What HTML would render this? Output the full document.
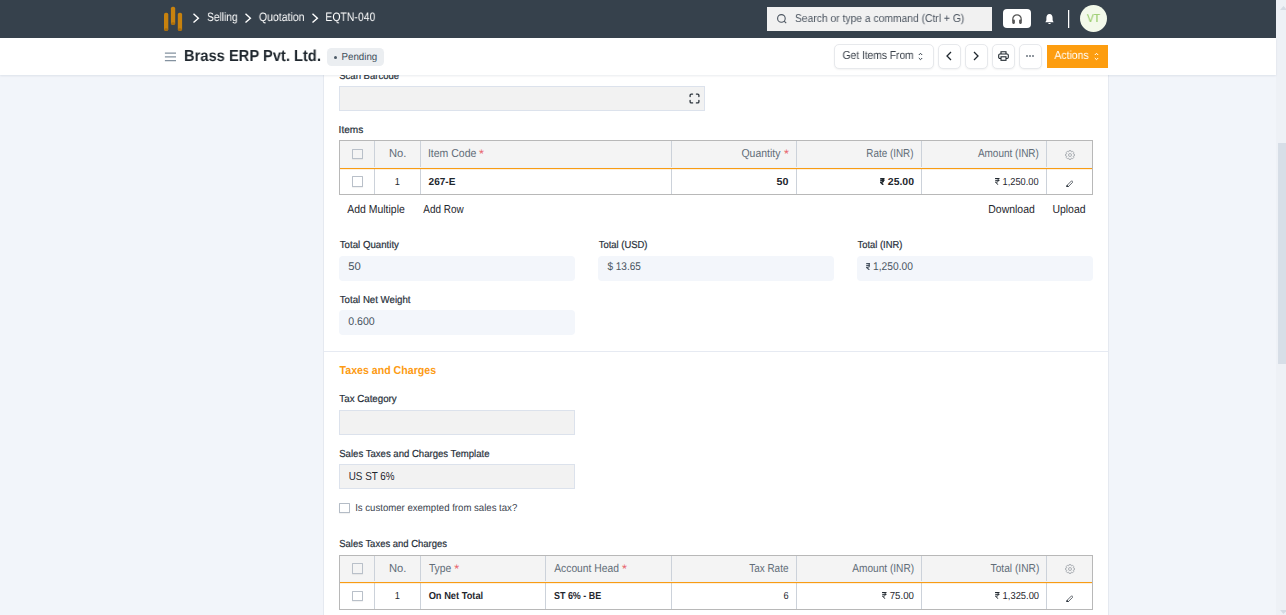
<!DOCTYPE html>
<html>
<head>
<meta charset="utf-8">
<title>EQTN-040</title>
<style>
*{box-sizing:border-box;margin:0;padding:0}
html,body{width:1286px;height:615px;overflow:hidden;background:#f2f5fa;font-family:"Liberation Sans",sans-serif}
body{position:relative}
.a,.t,svg{position:absolute}
.g{will-change:transform}
.t{white-space:nowrap;line-height:1;transform-origin:0 0;display:block;text-rendering:geometricPrecision}
.inp{background:#f2f2f2;border:1px solid #dce2ec}
.ro{background:#f3f6fb;border-radius:4px}
.tbl{border:1px solid #b8b8b8;background:#fff}
.th{background:#f4f4f4}
.ol{background:#f89c14;height:1px;box-shadow:0 1px 0 rgba(248,156,20,.15)}
.v{width:1px;background:#ccd2da}
.cb{width:11px;height:11px;border:1px solid #b9c0c9;border-radius:0.500px;background:#fff;box-shadow:0 1px 1px rgba(0,0,0,.06)}
.btn{background:#fff;border:1px solid #e7e9ec;border-radius:5px;box-shadow:0 1px 2px rgba(0,0,0,.05)}
</style>
</head>
<body>
<!-- scrollbar -->
<div class="a" style="left:1276px;top:0;width:10px;height:615px;background:#eef1f6"></div>
<div class="a" style="left:1278px;top:143px;width:8px;height:221px;background:#d7dee7"></div>
<svg style="left:1279.900px;top:5.900px" width="7" height="3.900" viewBox="0 0 7 3.900"><path d="M0 3.900 L3.500 0 L7 3.900Z" fill="#d5dbe4"/></svg>
<svg style="left:1279.900px;top:610px" width="7" height="4" viewBox="0 0 7 4"><path d="M0 0 L3.500 4 L7 0Z" fill="#d5dbe4"/></svg>

<!-- card -->
<div class="a" style="left:323px;top:75px;width:786px;height:540px;background:#fff;border-left:1px solid #e5e9f0;border-right:1px solid #e5e9f0"></div>

<!-- barcode input -->
<div class="a inp" style="left:339px;top:86px;width:366px;height:25px"></div>
<svg style="left:688.500px;top:92.600px" width="11" height="11" viewBox="0 0 11 11" fill="none" stroke="#2b333b" stroke-width="1.300" stroke-linecap="round"><path d="M1.100 3.600 V2.300 Q1.100 1.100 2.300 1.100 H3.600 M7.400 1.100 H8.700 Q9.900 1.100 9.900 2.300 V3.600 M9.900 7.400 V8.700 Q9.900 9.900 8.700 9.900 H7.400 M3.600 9.900 H2.300 Q1.100 9.900 1.100 8.700 V7.400"/></svg>

<!-- items table -->
<div class="a tbl" style="left:339px;top:140px;width:754px;height:55px"></div>
<div class="a th" style="left:340px;top:141px;width:752px;height:26px"></div>
<div class="a v" style="left:374px;top:141px;height:53px"></div>
<div class="a v" style="left:420px;top:141px;height:53px"></div>
<div class="a v" style="left:671px;top:141px;height:53px"></div>
<div class="a v" style="left:796px;top:141px;height:53px"></div>
<div class="a v" style="left:921px;top:141px;height:53px"></div>
<div class="a v" style="left:1046px;top:141px;height:53px"></div>
<div class="a" style="left:340px;top:167px;width:752px;height:1px;background:#eef2f8"></div>
<div class="a ol" style="left:340px;top:168px;width:752px"></div>
<div class="a cb" style="left:352px;top:149px;height:10px;background:transparent"></div>
<div class="a cb" style="left:352px;top:176px;height:11px"></div>
<svg style="left:1065px;top:150px" width="10" height="10" viewBox="0 0 10 10" fill="none" stroke="#9a9fa6" stroke-width="0.800" stroke-linejoin="round"><path d="M4.21 0.47 L5.79 0.47 L5.86 1.40 L6.93 1.85 L7.65 1.24 L8.76 2.35 L8.15 3.07 L8.60 4.14 L9.53 4.21 L9.53 5.79 L8.60 5.86 L8.15 6.93 L8.76 7.65 L7.65 8.76 L6.93 8.15 L5.86 8.60 L5.79 9.53 L4.21 9.53 L4.14 8.60 L3.07 8.15 L2.35 8.76 L1.24 7.65 L1.85 6.93 L1.40 5.86 L0.47 5.79 L0.47 4.21 L1.40 4.14 L1.85 3.07 L1.24 2.35 L2.35 1.24 L3.07 1.85 L4.14 1.40Z"/><circle cx="5" cy="5" r="1.500"/></svg><svg style="left:1065.500px;top:179.700px" width="7.700" height="7.700" viewBox="0 0 9 9" fill="none" stroke="#2b333b" stroke-width="0.850" stroke-linejoin="round"><path d="M0.900 8.100 L1.300 6.200 L6.300 1.200 Q6.900 0.600 7.500 1.200 L7.800 1.500 Q8.400 2.100 7.800 2.700 L2.800 7.700 Z"/><path d="M0.900 8.100 L1.300 6.200 L2.800 7.700Z" fill="#2b333b"/></svg>

<!-- totals -->
<div class="a ro" style="left:339px;top:256px;width:236px;height:25px"></div>
<div class="a ro" style="left:598px;top:256px;width:236px;height:25px"></div>
<div class="a ro" style="left:857px;top:256px;width:236px;height:25px"></div>
<div class="a ro" style="left:339px;top:310px;width:236px;height:25px"></div>

<!-- section divider -->
<div class="a" style="left:324px;top:351px;width:784px;height:1px;background:#e6eaf2"></div>

<div class="a inp" style="left:339px;top:410px;width:236px;height:25px"></div>
<div class="a inp" style="left:339px;top:464px;width:236px;height:25px"></div>
<div class="a cb" style="left:339px;top:503px;height:10px;border-color:#b4bcc6"></div>

<!-- taxes table -->
<div class="a tbl" style="left:339px;top:555px;width:754px;height:55px"></div>
<div class="a th" style="left:340px;top:556px;width:752px;height:26px"></div>
<div class="a v" style="left:374px;top:556px;height:53px"></div>
<div class="a v" style="left:420px;top:556px;height:53px"></div>
<div class="a v" style="left:545px;top:556px;height:53px"></div>
<div class="a v" style="left:671px;top:556px;height:53px"></div>
<div class="a v" style="left:796px;top:556px;height:53px"></div>
<div class="a v" style="left:921px;top:556px;height:53px"></div>
<div class="a v" style="left:1046px;top:556px;height:53px"></div>
<div class="a" style="left:340px;top:581px;width:752px;height:1px;background:#eef2f8"></div>
<div class="a ol" style="left:340px;top:582px;width:752px"></div>
<div class="a cb" style="left:352px;top:563px;height:11px;background:transparent"></div>
<div class="a cb" style="left:352px;top:591px;height:10px"></div>
<svg style="left:1065px;top:564px" width="10" height="10" viewBox="0 0 10 10" fill="none" stroke="#9a9fa6" stroke-width="0.800" stroke-linejoin="round"><path d="M4.21 0.47 L5.79 0.47 L5.86 1.40 L6.93 1.85 L7.65 1.24 L8.76 2.35 L8.15 3.07 L8.60 4.14 L9.53 4.21 L9.53 5.79 L8.60 5.86 L8.15 6.93 L8.76 7.65 L7.65 8.76 L6.93 8.15 L5.86 8.60 L5.79 9.53 L4.21 9.53 L4.14 8.60 L3.07 8.15 L2.35 8.76 L1.24 7.65 L1.85 6.93 L1.40 5.86 L0.47 5.79 L0.47 4.21 L1.40 4.14 L1.85 3.07 L1.24 2.35 L2.35 1.24 L3.07 1.85 L4.14 1.40Z"/><circle cx="5" cy="5" r="1.500"/></svg><svg style="left:1065.500px;top:594.700px" width="7.700" height="7.700" viewBox="0 0 9 9" fill="none" stroke="#2b333b" stroke-width="0.850" stroke-linejoin="round"><path d="M0.900 8.100 L1.300 6.200 L6.300 1.200 Q6.900 0.600 7.500 1.200 L7.800 1.500 Q8.400 2.100 7.800 2.700 L2.800 7.700 Z"/><path d="M0.900 8.100 L1.300 6.200 L2.800 7.700Z" fill="#2b333b"/></svg>

<span class="t" style="left:339px;top:72px;font-size:10.2px;color:#27303a;-webkit-text-stroke:0.2px;transform:translateX(0.23px) scaleX(0.9349);">Scan Barcode</span>
<!-- page head -->
<div class="a" style="left:0;top:38px;width:1276px;height:37px;background:#fff;box-shadow:0 1px 2px rgba(40,60,90,.10)"></div>
<svg style="left:164px;top:51px" width="13" height="11" viewBox="0 0 13 11" stroke="#8492a0" stroke-width="1.250"><path d="M0.900 2 H12 M0.900 5.800 H12 M0.900 9.600 H12"/></svg>
<div class="a" style="left:327px;top:48px;width:57px;height:18px;border-radius:4.500px;background:#ebeef1"></div>
<div class="a" style="left:334px;top:56px;width:3px;height:3px;border-radius:2px;background:#4c5a67"></div>
<div class="a btn" style="left:834px;top:44px;width:100px;height:25px"></div>
<div class="a btn" style="left:938px;top:44px;width:23px;height:25px"></div>
<div class="a btn" style="left:965px;top:44px;width:23px;height:25px"></div>
<div class="a btn" style="left:992px;top:44px;width:23px;height:25px"></div>
<div class="a btn" style="left:1019px;top:44px;width:23px;height:25px"></div>
<div class="a" style="left:1047px;top:45px;width:61px;height:23px;background:#fd9d0f"></div>
<svg style="left:946px;top:51px" width="6" height="10" viewBox="0 0 6 10" fill="none" stroke="#1f272e" stroke-width="1.3"><path d="M5 1 L1 5 L5 9"/></svg>
<svg style="left:973px;top:51px" width="6" height="10" viewBox="0 0 6 10" fill="none" stroke="#1f272e" stroke-width="1.3"><path d="M1 1 L5 5 L1 9"/></svg>
<svg style="left:998px;top:51px" width="11" height="10" viewBox="0 0 11 10" fill="none" stroke="#1f272e" stroke-width="1.1"><path d="M3 3 V0.700 H8 V3"/><rect x="0.700" y="3" width="9.600" height="4.500" rx="1.200"/><rect x="3" y="5.800" width="5" height="3.500" fill="#fff"/></svg>
<div class="a" style="left:1026px;top:55px;width:2px;height:2px;border-radius:1px;background:#6c7680;box-shadow:3px 0 0 #6c7680,6px 0 0 #6c7680"></div>
<svg style="left:918.200px;top:52px" width="5" height="9" viewBox="0 0 5 9" fill="none" stroke="#36414c" stroke-width="1"><path d="M0.800 3 L2.500 1.300 L4.200 3 M0.800 6 L2.500 7.700 L4.200 6"/></svg>
<svg style="left:1094px;top:52px" width="5" height="9" viewBox="0 0 5 9" fill="none" stroke="#fff" stroke-width="1"><path d="M0.800 3 L2.500 1.300 L4.200 3 M0.800 6 L2.500 7.700 L4.200 6"/></svg>

<!-- navbar -->
<div class="a" style="left:0;top:0;width:1276px;height:38px;background:#36414c"></div>
<svg style="left:163px;top:6px" width="20" height="26" viewBox="0 0 20 26">
  <rect x="1" y="6.700" width="4.300" height="18.400" rx="1.800" fill="#c8820e"/>
  <rect x="7.900" y="0.700" width="4.300" height="18.400" rx="1.800" fill="#c8820e"/>
  <rect x="14.800" y="6.700" width="4.300" height="18.400" rx="1.800" fill="#c8820e"/>
  <ellipse cx="3.150" cy="23.600" rx="1.900" ry="1.300" fill="#a96d0d"/><ellipse cx="10.050" cy="17.600" rx="1.900" ry="1.300" fill="#a96d0d"/><ellipse cx="16.950" cy="23.600" rx="1.900" ry="1.300" fill="#a96d0d"/>
</svg>
<svg style="left:192px;top:12px" width="8" height="12" viewBox="0 0 8 12" fill="none" stroke="#fff" stroke-width="1.400"><path d="M1.500 1.800 L6.400 6.200 L1.500 10.600"/></svg>
<svg style="left:244px;top:12px" width="8" height="12" viewBox="0 0 8 12" fill="none" stroke="#fff" stroke-width="1.400"><path d="M1.500 1.800 L6.400 6.200 L1.500 10.600"/></svg>
<svg style="left:311px;top:12px" width="8" height="12" viewBox="0 0 8 12" fill="none" stroke="#fff" stroke-width="1.400"><path d="M1.500 1.800 L6.400 6.200 L1.500 10.600"/></svg>
<div class="a" style="left:767px;top:7px;width:225px;height:24px;background:#f1f1f1"></div>
<svg style="left:776px;top:13px" width="12" height="12" viewBox="0 0 12 12" fill="none" stroke="#4c5560" stroke-width="1.100"><circle cx="5.400" cy="5.400" r="3.800"/><path d="M8.200 8.200 L10.200 10.200"/></svg>
<div class="a" style="left:1003px;top:9px;width:28px;height:19px;background:#fff;border-radius:4px"></div>
<svg style="left:1011px;top:12.500px" width="12" height="12" viewBox="0 0 12 12"><path d="M1.800 7.500 V6 a4.200 4.200 0 0 1 8.400 0 V7.500" fill="none" stroke="#555" stroke-width="1.200"/><rect x="1.200" y="6.400" width="2.700" height="4.500" rx="1.100" fill="#555"/><rect x="8.100" y="6.400" width="2.700" height="4.500" rx="1.100" fill="#555"/></svg>
<svg style="left:1043.700px;top:12.500px" width="11" height="13.600" viewBox="0 0 12 14"><path d="M6 0.800 C3.600 0.800 2.600 2.800 2.600 5 V7.600 L1.500 9.600 H10.500 L9.400 7.600 V5 C9.400 2.800 8.400 0.800 6 0.800 Z" fill="#fff"/><path d="M4.700 10.400 a1.300 1.300 0 0 0 2.600 0Z" fill="#fff"/></svg>
<div class="a" style="left:1068px;top:10px;width:1px;height:18px;background:#fff;box-shadow:1px 0 0 rgba(255,255,255,.25)"></div>
<div class="a" style="left:1079.800px;top:4.800px;width:27.300px;height:27.300px;border-radius:14px;background:#f3f9ea"></div>

<span class="t g" style="left:206px;top:11px;font-size:12.2px;color:#ffffff;transform:translateX(0.98px) scaleX(0.8397);">Selling</span>
<span class="t g" style="left:258px;top:11px;font-size:12.2px;color:#ffffff;transform:translateX(0.87px) scaleX(0.8641);">Quotation</span>
<span class="t g" style="left:325px;top:11px;font-size:12.2px;color:#ffffff;transform:translateX(0.34px) scaleX(0.8581);">EQTN-040</span>
<span class="t g" style="left:794px;top:14px;font-size:11.4px;color:#4c5560;transform:translateX(0.95px) scaleX(0.9050);">Search or type a command (Ctrl + G)</span>
<span class="t g" style="left:1086px;top:14px;font-size:11.4px;color:#8bc559;transform:translateX(0.90px) scaleX(0.9123);">VT</span>
<span class="t g" style="left:183px;top:49px;font-size:16px;color:#1f272e;font-weight:bold;transform:translateX(0.98px) scaleX(0.9184);">Brass ERP Pvt. Ltd.</span>
<span class="t" style="left:341px;top:53px;font-size:10.2px;color:#414e5b;transform:translateX(0.48px) scaleX(0.9556);">Pending</span>
<span class="t g" style="left:842px;top:50px;font-size:11.6px;color:#383f48;transform:translateX(0.56px) scaleX(0.8833);">Get Items From</span>
<span class="t g" style="left:1054px;top:50px;font-size:11.6px;color:#ffffff;transform:translateX(0.40px) scaleX(0.9007);">Actions</span>
<span class="t" style="left:338px;top:126px;font-size:10.2px;color:#27303a;-webkit-text-stroke:0.2px;transform:translateX(0.61px) scaleX(0.9915);">Items</span>
<span class="t" style="left:389px;top:149px;font-size:11.5px;color:#626d78;transform:translateX(0.03px) scaleX(0.9714);">No.</span>
<span class="t" style="left:427px;top:149px;font-size:11.5px;color:#626d78;transform:translateX(0.89px) scaleX(0.9146);">Item Code</span>
<span class="t" style="left:741px;top:149px;font-size:11.5px;color:#626d78;transform:translateX(0.45px) scaleX(0.9089);">Quantity</span>
<span class="t" style="left:866px;top:149px;font-size:11.5px;color:#626d78;transform:translateX(0.34px) scaleX(0.8582);">Rate (INR)</span>
<span class="t" style="left:977px;top:149px;font-size:11.5px;color:#626d78;transform:translateX(0.90px) scaleX(0.8676);">Amount (INR)</span>
<span class="t" style="left:394px;top:178px;font-size:10.2px;color:#1f272e;transform:translateX(0.80px) scaleX(0.9000);">1</span>
<span class="t" style="left:428px;top:178px;font-size:10.2px;color:#1f272e;font-weight:bold;transform:translateX(0.55px) scaleX(0.9849);">267-E</span>
<span class="t" style="left:776px;top:178px;font-size:10.2px;color:#1f272e;font-weight:bold;transform:translateX(0.54px) scaleX(1.0512);">50</span>
<span class="t" style="left:887px;top:178px;font-size:10.2px;color:#1f272e;font-weight:bold;transform:translateX(0.84px) scaleX(1.0263);">25.00</span>
<span class="t" style="left:1002px;top:178px;font-size:10.2px;color:#1f272e;transform:translateX(0.62px) scaleX(0.9065);">1,250.00</span>
<span class="t" style="left:347px;top:205px;font-size:11.5px;color:#1f272e;transform:translateX(0.30px) scaleX(0.9084);">Add Multiple</span>
<span class="t" style="left:423px;top:205px;font-size:11.5px;color:#1f272e;transform:translateX(0.30px) scaleX(0.8642);">Add Row</span>
<span class="t" style="left:988px;top:205px;font-size:11.5px;color:#1f272e;transform:translateX(0.29px) scaleX(0.9091);">Download</span>
<span class="t" style="left:1052px;top:205px;font-size:11.5px;color:#1f272e;transform:translateX(0.39px) scaleX(0.9094);">Upload</span>
<span class="t" style="left:339px;top:241px;font-size:10.2px;color:#27303a;-webkit-text-stroke:0.2px;transform:translateX(0.76px) scaleX(0.9500);">Total Quantity</span>
<span class="t" style="left:598px;top:241px;font-size:10.2px;color:#27303a;-webkit-text-stroke:0.2px;transform:translateX(0.67px) scaleX(0.9275);">Total (USD)</span>
<span class="t" style="left:857px;top:241px;font-size:10.2px;color:#27303a;-webkit-text-stroke:0.2px;transform:translateX(0.57px) scaleX(0.9194);">Total (INR)</span>
<span class="t" style="left:348px;top:262px;font-size:11.2px;color:#4a5562;transform:translateX(0.20px) scaleX(1.0087);">50</span>
<span class="t" style="left:607px;top:262px;font-size:11.2px;color:#4a5562;transform:translateX(0.38px) scaleX(0.8980);">$ 13.65</span>
<span class="t" style="left:873px;top:262px;font-size:11.2px;color:#4a5562;transform:translateX(0.01px) scaleX(0.9153);">1,250.00</span>
<span class="t" style="left:339px;top:296px;font-size:10.2px;color:#27303a;-webkit-text-stroke:0.2px;transform:translateX(0.76px) scaleX(0.9495);">Total Net Weight</span>
<span class="t" style="left:348px;top:317px;font-size:11.2px;color:#4a5562;transform:translateX(0.23px) scaleX(0.9481);">0.600</span>
<span class="t" style="left:339px;top:366px;font-size:11.5px;color:#fd9b14;font-weight:bold;transform:translateX(0.60px) scaleX(0.9218);">Taxes and Charges</span>
<span class="t" style="left:339px;top:395px;font-size:10.2px;color:#27303a;-webkit-text-stroke:0.2px;transform:translateX(0.36px) scaleX(0.9556);">Tax Category</span>
<span class="t" style="left:339px;top:450px;font-size:10.2px;color:#27303a;-webkit-text-stroke:0.2px;transform:translateX(0.23px) scaleX(0.9396);">Sales Taxes and Charges Template</span>
<span class="t" style="left:348px;top:472px;font-size:11.5px;color:#1f272e;transform:translateX(0.74px) scaleX(0.8577);">US ST 6%</span>
<span class="t" style="left:355px;top:504px;font-size:10.2px;color:#38424d;transform:translateX(0.16px) scaleX(0.9417);">Is customer exempted from sales tax?</span>
<span class="t" style="left:339px;top:540px;font-size:10.2px;color:#27303a;-webkit-text-stroke:0.2px;transform:translateX(0.24px) scaleX(0.9296);">Sales Taxes and Charges</span>
<span class="t" style="left:389px;top:564px;font-size:11.5px;color:#626d78;transform:translateX(0.03px) scaleX(0.9714);">No.</span>
<span class="t" style="left:428px;top:564px;font-size:11.5px;color:#626d78;transform:translateX(0.88px) scaleX(0.8990);">Type</span>
<span class="t" style="left:554px;top:564px;font-size:11.5px;color:#626d78;transform:translateX(0.20px) scaleX(0.8965);">Account Head</span>
<span class="t" style="left:749px;top:564px;font-size:11.5px;color:#626d78;transform:translateX(0.18px) scaleX(0.8648);">Tax Rate</span>
<span class="t" style="left:852px;top:564px;font-size:11.5px;color:#626d78;transform:translateX(0.20px) scaleX(0.8806);">Amount (INR)</span>
<span class="t" style="left:990px;top:564px;font-size:11.5px;color:#626d78;transform:translateX(0.58px) scaleX(0.8870);">Total (INR)</span>
<span class="t" style="left:394px;top:592px;font-size:10.2px;color:#1f272e;transform:translateX(0.80px) scaleX(0.9000);">1</span>
<span class="t" style="left:428px;top:592px;font-size:10.2px;color:#1f272e;font-weight:bold;transform:translateX(0.64px) scaleX(0.9123);">On Net Total</span>
<span class="t" style="left:553px;top:592px;font-size:10.2px;color:#1f272e;font-weight:bold;transform:translateX(0.98px) scaleX(0.8770);">ST 6% - BE</span>
<span class="t" style="left:783px;top:592px;font-size:10.2px;color:#1f272e;transform:translateX(0.48px) scaleX(0.9000);">6</span>
<span class="t" style="left:889px;top:592px;font-size:10.2px;color:#1f272e;transform:translateX(0.73px) scaleX(0.9469);">75.00</span>
<span class="t" style="left:1002px;top:592px;font-size:10.2px;color:#1f272e;transform:translateX(0.61px) scaleX(0.9195);">1,325.00</span>
<span class="t" style="left:478px;top:148px;font-size:12.5px;color:#e8636b;transform:translateX(0.95px) scaleX(1.0000);">*</span>
<span class="t" style="left:783px;top:148px;font-size:12.5px;color:#e8636b;transform:translateX(0.95px) scaleX(1.0000);">*</span>
<span class="t" style="left:454px;top:563px;font-size:12.5px;color:#e8636b;transform:translateX(0.15px) scaleX(1.0000);">*</span>
<span class="t" style="left:622px;top:563px;font-size:12.5px;color:#e8636b;transform:translateX(0.05px) scaleX(1.0000);">*</span>
<svg style="left:880.00px;top:178.20px" width="4.76" height="6.80" viewBox="0 0 7 10" fill="none" stroke="#1f272e" stroke-width="2.21"><path d="M0.300 0.700 H6.700 M0.300 3.400 H6.700 M0.300 0.700 H2.400 C4.300 0.700 5 2 5 3.400 C5 5 4 6.100 2.300 6.100 H0.600 L4.800 10"/></svg>
<svg style="left:995.20px;top:178.20px" width="4.76" height="6.80" viewBox="0 0 7 10" fill="none" stroke="#1f272e" stroke-width="1.47"><path d="M0.300 0.700 H6.700 M0.300 3.400 H6.700 M0.300 0.700 H2.400 C4.300 0.700 5 2 5 3.400 C5 5 4 6.100 2.300 6.100 H0.600 L4.800 10"/></svg>
<svg style="left:865.60px;top:263.00px" width="4.90" height="7.00" viewBox="0 0 7 10" fill="none" stroke="#4a5562" stroke-width="1.57"><path d="M0.300 0.700 H6.700 M0.300 3.400 H6.700 M0.300 0.700 H2.400 C4.300 0.700 5 2 5 3.400 C5 5 4 6.100 2.300 6.100 H0.600 L4.800 10"/></svg>
<svg style="left:882.40px;top:592.20px" width="4.76" height="6.80" viewBox="0 0 7 10" fill="none" stroke="#1f272e" stroke-width="1.47"><path d="M0.300 0.700 H6.700 M0.300 3.400 H6.700 M0.300 0.700 H2.400 C4.300 0.700 5 2 5 3.400 C5 5 4 6.100 2.300 6.100 H0.600 L4.800 10"/></svg>
<svg style="left:995.20px;top:592.20px" width="4.76" height="6.80" viewBox="0 0 7 10" fill="none" stroke="#1f272e" stroke-width="1.47"><path d="M0.300 0.700 H6.700 M0.300 3.400 H6.700 M0.300 0.700 H2.400 C4.300 0.700 5 2 5 3.400 C5 5 4 6.100 2.300 6.100 H0.600 L4.800 10"/></svg>
</body>
</html>
